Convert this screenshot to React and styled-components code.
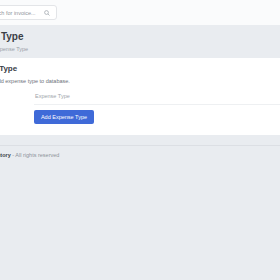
import React from "react";
import styled, { createGlobalStyle } from "styled-components";

const GlobalStyle = createGlobalStyle`
  html, body {
    margin: 0;
    padding: 0;
    background: #e9ecf0;
    font-family: "Liberation Sans", Arial, sans-serif;
    overflow: hidden;
  }
`;

const Page = styled.div`
  width: 280px;
  height: 280px;
  overflow: hidden;
  background: #e9ecf0;
`;

const Shift = styled.div`
  margin-left: ${({ $by }) => $by}px;
`;

const Header = styled.header`
  height: 25px;
  background: #fafbfc;
  display: flex;
  align-items: center;
`;

const Search = styled.div`
  margin-left: -19px;
  width: 76px;
  height: 15px;
  box-sizing: border-box;
  border: 1px solid #e3e5e8;
  border-radius: 3px;
  background: #fff;
  display: flex;
  align-items: center;
  justify-content: space-between;
  padding: 0 6px 0 5px;
  font-size: 5.5px;
  color: #8f959c;
`;

const TitleBand = styled.div`
  height: 33px;
  box-sizing: border-box;
  padding-top: 6px;
`;

const PageTitle = styled.h1`
  margin: 0;
  font-size: 10px;
  font-weight: 700;
  color: #3b4046;
  line-height: 11px;
`;

const Crumb = styled.div`
  margin-top: 4px;
  font-size: 5.5px;
  color: #9aa0a7;
`;

const Card = styled.section`
  background: #fff;
  height: 77px;
  box-sizing: border-box;
  padding-top: 6px;
`;

const CardTitle = styled.h2`
  margin: 0;
  font-size: 8px;
  font-weight: 700;
  color: #3b4046;
  line-height: 10px;
`;

const CardText = styled.p`
  margin: 4px 0 0;
  font-size: 5.5px;
  color: #6c727a;
`;

const Form = styled.div`
  margin-left: 34px;
  margin-top: 9px;
  display: flex;
  flex-direction: column;
  align-items: flex-start;
`;

const Field = styled.div`
  width: 246px;
  box-sizing: border-box;
  padding: 0 0 5px 1px;
  border-bottom: 1px solid #eef0f2;
  font-size: 5.5px;
  color: #9ea4aa;
`;

const Button = styled.button`
  margin-top: 5px;
  width: 60px;
  height: 14px;
  border: none;
  border-radius: 2px;
  background: #3f6ad8;
  color: #fff;
  font-family: inherit;
  font-size: 5.5px;
  padding: 0;
`;

const Footer = styled.footer`
  margin-top: 10px;
  border-top: 1px solid #dcdfe4;
  padding-top: 6px;
  font-size: 5.5px;
  color: #8d939a;
  white-space: nowrap;
`;

const Strong = styled.b`
  color: #3b4046;
  font-weight: 700;
`;

const SearchIcon = () => (
  <svg width="6" height="6" viewBox="0 0 12 12" fill="none" stroke="#9aa0a7" strokeWidth="1.4">
    <circle cx="5" cy="5" r="3.8" />
    <path d="M8 8l3 3" />
  </svg>
);

export default function App() {
  return (
    <Page>
      <GlobalStyle />
      <Header>
        <Search>
          <span>Search for invoice...</span>
          <SearchIcon />
        </Search>
      </Header>
      <TitleBand>
        <Shift $by={-43}>
          <PageTitle>Expense Type</PageTitle>
        </Shift>
        <Shift $by={-18}>
          <Crumb>Add Expense Type</Crumb>
        </Shift>
      </TitleBand>
      <Card>
        <Shift $by={-36}>
          <CardTitle>Expense Type</CardTitle>
        </Shift>
        <Shift $by={-6}>
          <CardText>Add expense type to database.</CardText>
        </Shift>
        <Form>
          <Field>Expense Type</Field>
          <Button>Add Expense Type</Button>
        </Form>
      </Card>
      <Footer>
        <Shift $by={-14}>
          <Strong>Inventory</Strong> - All rights reserved
        </Shift>
      </Footer>
    </Page>
  );
}
